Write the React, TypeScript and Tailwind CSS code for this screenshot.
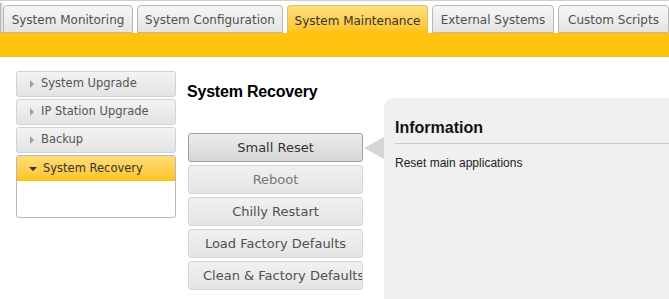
const tabs = [
  { label: "System Monitoring", w: "w-[130px]", ml: "ml-0" },
  { label: "System Configuration", w: "w-[146px]", ml: "ml-[4px]" },
  { label: "System Maintenance", w: "w-[141px]", ml: "ml-[4px]", active: true },
  { label: "External Systems", w: "w-[122px]", ml: "ml-[4px]" },
  { label: "Custom Scripts", w: "w-[111px]", ml: "ml-[4px]" },
];

const menu = ["System Upgrade", "IP Station Upgrade", "Backup"];

const actions = [
  { label: "Small Reset", selected: true, text: "text-[#333]" },
  { label: "Reboot", text: "text-[#777]" },
  { label: "Chilly Restart", text: "text-[#505050]" },
  { label: "Load Factory Defaults", text: "text-[#505050]" },
  { label: "Clean & Factory Defaults", text: "text-[#505050]" },
];

export default function App() {
  return (
    <div className="w-[669px] h-[299px] overflow-hidden bg-white font-['DejaVu_Sans',Verdana,sans-serif]">
      {/* tab strip */}
      <div className="flex items-end h-[33px] border-t border-[#cfcfcf] pt-[3px]">
        <div className="w-[3px] h-[30px] bg-[#e2e2e2] border-l border-b border-[#b4b4b4]" />
        {tabs.map((t) => (
          <div
            key={t.label}
            className={
              t.active
                ? `${t.w} ${t.ml} h-[28px] flex items-center justify-center rounded-t-[4px] border border-b-0 border-[#d3c07a] bg-gradient-to-b from-[#ffdf7a] to-[#fec20f] text-[12px] text-[#333] pt-[2px]`
                : `${t.w} ${t.ml} h-[28px] flex items-center justify-center rounded-t-[4px] border border-[#b8b8b8] bg-gradient-to-b from-[#f6f6f6] to-[#e4e4e4] text-[12px] text-[#505050] pt-[2px]`
            }
          >
            {t.label}
          </div>
        ))}
      </div>
      <div className="h-[24px] bg-[#fec20f]" />

      {/* content */}
      <div className="flex pt-[14px]">
        {/* side menu */}
        <div className="ml-[16px] w-[160px] flex flex-col gap-[2px]">
          {menu.map((m) => (
            <div
              key={m}
              className="h-[26px] flex items-center pl-[13px] rounded-[3px] border border-[#d2d2d2] bg-gradient-to-b from-[#f3f3f3] to-[#e3e3e3] text-[11.5px] text-[#555]"
            >
              <span className="w-0 h-0 border-y-[4px] border-y-transparent border-l-[4px] border-l-[#a0a0a0] mr-[7px]" />
              {m}
            </div>
          ))}
          <div className="h-[63px] rounded-[3px] border border-[#b8b8b8] overflow-hidden bg-white">
            <div className="h-[25px] flex items-center pl-[12px] bg-gradient-to-b from-[#ffdd77] to-[#fec20f] text-[11.5px] text-[#333]">
              <span className="w-0 h-0 border-x-[4px] border-x-transparent border-t-[4px] border-t-[#333] mr-[6px]" />
              System Recovery
            </div>
          </div>
        </div>

        {/* actions */}
        <div className="ml-[11px] w-[176px] flex flex-col">
          <h2 className="mt-[12px] h-[18px] leading-[18px] text-[16px] tracking-[-0.2px] font-bold text-black font-['Liberation_Sans',Arial,sans-serif]">
            System Recovery
          </h2>
          <div className="mt-[32px] ml-[1px] flex flex-col gap-[3px]">
            {actions.map((a) => (
              <div
                key={a.label}
                className={`w-[175px] h-[29px] px-[14px] leading-[27px] text-center overflow-hidden whitespace-nowrap rounded-[3px] border text-[13px] ${a.text} ${
                  a.selected
                    ? "border-[#9d9d9d] bg-gradient-to-b from-[#ececec] to-[#d6d6d6]"
                    : "border-[#d6d6d6] bg-gradient-to-b from-[#f1f1f1] to-[#e4e4e4]"
                }`}
              >
                {a.label}
              </div>
            ))}
          </div>
        </div>

        {/* information panel */}
        <div className="relative ml-[21px] mt-[27px] flex-1 h-[210px] rounded-tl-[10px] bg-[#f0f0f0] pl-[11px] pt-[21px] font-['Liberation_Sans',Arial,sans-serif]">
          <div className="absolute left-[-20px] top-[39px] w-0 h-0 border-y-[11px] border-y-transparent border-r-[20px] border-r-[#d6d6d6]" />
          <h3 className="text-[16px] leading-[18px] font-bold text-[#111]">Information</h3>
          <div className="mt-[6px] border-t border-[#cccccc]" />
          <p className="mt-[12px] text-[12px] leading-[14px] text-[#222]">Reset main applications</p>
        </div>
      </div>
    </div>
  );
}
